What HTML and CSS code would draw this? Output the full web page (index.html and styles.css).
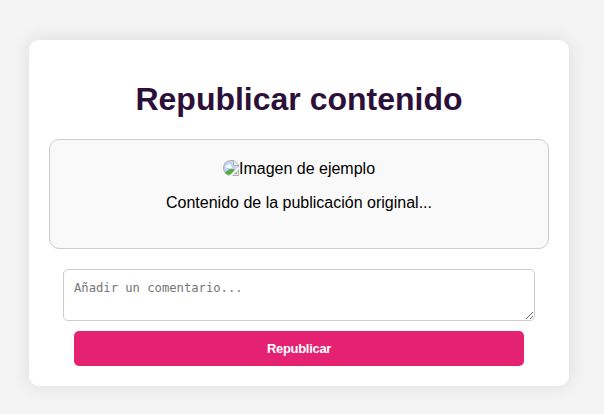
FILE: index.html
```html
<!DOCTYPE html>
<html lang="es">
<head>
<meta charset="utf-8">
<title>Republicar contenido</title>
<link rel="stylesheet" href="styles.css">
</head>
<body>
<main class="container">
  <h1 class="title">Republicar contenido</h1>
  <section class="post">
    <div class="post-image">
      <svg class="broken" viewBox="0 0 16 16" width="16" height="16">
        <path d="M0 8a8 8 0 0 1 8-8h3l5 5v11H8a8 8 0 0 1-8-8z" fill="#b0b3b6"/>
        <path d="M1 8a7 7 0 0 1 7-7h2v5h5v3l-7 6a7 7 0 0 1-7-7z" fill="#c3d4f3"/>
        <path d="M11 1l4 4h-4z" fill="#f4f4f4"/>
        <path d="M3 7a1.500 1.500 0 0 1 1.500-2 2 2 0 0 1 3.500 1 1 1 0 0 1 0 2H4z" fill="#fff"/>
        <path d="M2 13q3-4 7-4 3 0 4 1.500L8 15q-4 0-6-2z" fill="#55ad3c"/>
        <path d="M16 7v2l-7 7H6l8-8z" fill="#f9f9f9"/>
        <path d="M15 11v4h-4z" fill="#f4f4f4"/>
        <path d="M14 12v2h-2z" fill="#55ad3c"/>
      </svg><span>Imagen de ejemplo</span>
    </div>
    <p class="post-text">Contenido de la publicación original...</p>
  </section>
  <textarea class="comment" placeholder="Añadir un comentario..."></textarea>
  <button class="submit">Republicar</button>
</main>
</body>
</html>
```
FILE: styles.css
```css
body {
  box-sizing: border-box;
  min-height: 414px;
  margin: 0;
  padding: 40px 0 0 29px;
  background: #f4f4f4;
  font-family: "Liberation Sans", Arial, sans-serif;
}
.container {
  box-sizing: border-box;
  width: 540px;
  height: 346px;
  padding: 20px;
  border-radius: 10px;
  background: #fff;
  box-shadow: 0 0 20px rgba(0, 0, 0, 0.1);
  text-align: center;
}
.title {
  margin: 21px 0;
  font-size: 32px;
  line-height: 37px;
  color: #2d1039;
}
.post {
  box-sizing: border-box;
  height: 110px;
  padding: 20px;
  margin-bottom: 20px;
  border: 1px solid #ccc;
  border-radius: 10px;
  background: #f9f9f9;
}
.post-image {
  display: flex;
  justify-content: center;
  line-height: 18px;
}
.post-text {
  margin: 16px 0 0;
  line-height: 18px;
}
.comment {
  display: block;
  box-sizing: border-box;
  width: 472px;
  height: 52px;
  margin: 0 auto 10px;
  padding: 11px 10px 9px;
  border: 1px solid #ccc;
  border-radius: 5px;
  font: 12.18px "DejaVu Sans Mono", monospace;
}
.submit {
  display: block;
  width: 450px;
  height: 35px;
  margin: 0 auto;
  border: 0;
  border-radius: 5px;
  background: #e52271;
  color: #fff;
  font: bold 13px "Liberation Sans", Arial, sans-serif;
  letter-spacing: -0.3px;
}
```
